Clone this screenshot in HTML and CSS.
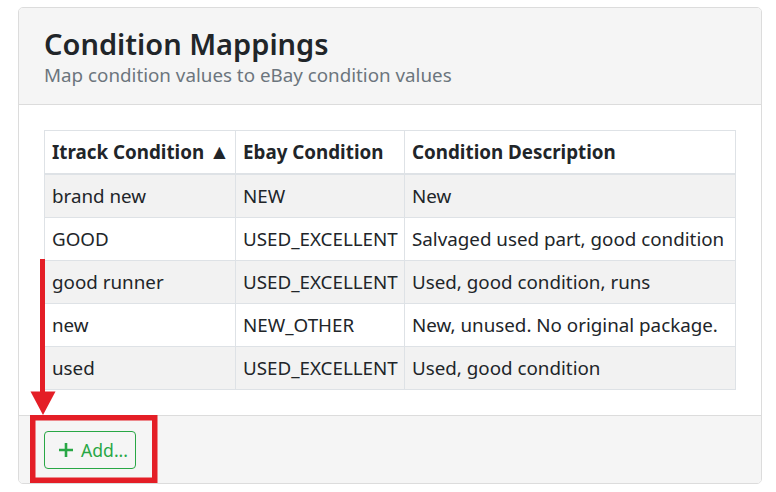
FILE: index.html
```html
<!DOCTYPE html>
<html lang="en">
<head>
<meta charset="utf-8">
<title>Condition Mappings</title>
<link rel="stylesheet" href="styles.css">
</head>
<body>
<div class="page">
  <div class="card">
    <div class="card-header">
      <h2 class="title">Condition Mappings</h2>
      <div class="subtitle">Map condition values to eBay condition values</div>
    </div>
    <div class="card-body">
      <table class="grid">
        <colgroup>
          <col class="c1"><col class="c2"><col class="c3">
        </colgroup>
        <thead>
          <tr><th>Itrack Condition <span class="sort">▲</span></th><th>Ebay Condition</th><th>Condition Description</th></tr>
        </thead>
        <tbody>
          <tr><td>brand new</td><td>NEW</td><td>New</td></tr>
          <tr><td>GOOD</td><td>USED_EXCELLENT</td><td>Salvaged used part, good condition</td></tr>
          <tr><td>good runner</td><td>USED_EXCELLENT</td><td>Used, good condition, runs</td></tr>
          <tr><td>new</td><td>NEW_OTHER</td><td>New, unused. No original package.</td></tr>
          <tr><td>used</td><td>USED_EXCELLENT</td><td>Used, good condition</td></tr>
        </tbody>
      </table>
    </div>
    <div class="card-footer">
      <button class="btn-add" type="button">
        <svg class="plus" width="16" height="16" viewBox="0 0 16 16"><path d="M8 1v14M1 8h14" stroke="#28a745" stroke-width="2.6" fill="none"/></svg>
        <span>Add...</span>
      </button>
    </div>
  </div>
  <svg class="annot" width="776" height="492" viewBox="0 0 776 492">
    <rect x="40" y="259" width="5" height="134" fill="#e41e26"/>
    <polygon points="30.5,391.5 55.5,391.5 43,415" fill="#e41e26"/>
    <rect x="32.75" y="417.75" width="122" height="62.5" fill="none" stroke="#e41e26" stroke-width="5.5"/>
  </svg>
</div>
</body>
</html>
```

FILE: styles.css
```css
html, body {
  margin: 0;
  padding: 0;
  background: #ffffff;
}

body {
  font-family: "Noto Sans", "Open Sans", sans-serif;
  color: #212529;
  font-size: 18.8px;
  line-height: 1.5;
}

.page {
  position: relative;
  width: 776px;
  height: 492px;
  padding: 7px 14px 0 18px;
  box-sizing: border-box;
}

.card {
  border: 1px solid #dcdcdc;
  border-radius: 5px;
  overflow: hidden;
  background: #fff;
}

.card-header {
  background: #f5f5f5;
  border-bottom: 1px solid #dcdcdc;
  padding: 18px 25px 16px;
}

.title {
  margin: 0;
  font-size: 29px;
  font-weight: 600;
  line-height: 36px;
  color: #212529;
}

.subtitle {
  color: #6c757d;
  font-size: 18.8px;
  line-height: 26px;
}

.card-body {
  padding: 25px;
}

.grid {
  width: 100%;
  border-collapse: collapse;
  table-layout: fixed;
}

.c1 { width: 191px; }
.c2 { width: 169px; }
.c3 { width: auto; }

.grid th,
.grid td {
  border: 1px solid #dee2e6;
  padding: 8px 7px;
  text-align: left;
  white-space: nowrap;
  line-height: 26px;
  overflow: visible;
}

.grid th {
  font-weight: 700;
  border-bottom: 2px solid #dee2e6;
}

.sort {
  font-size: 21px;
  line-height: 20px;
}

.grid tbody tr:nth-child(odd) td {
  background: #f2f2f2;
}

.card-footer {
  background: #f5f5f5;
  border-top: 1px solid #dcdcdc;
  padding: 15px 25px 14px;
}

.btn-add {
  display: inline-flex;
  align-items: center;
  gap: 7px;
  height: 38px;
  padding: 0 7px 0 13px;
  border: 1px solid #28a745;
  border-radius: 4px;
  background: transparent;
  color: #28a745;
  font-family: inherit;
  font-size: 17.6px;
}

.annot {
  position: absolute;
  left: 0;
  top: 0;
  pointer-events: none;
}
```
